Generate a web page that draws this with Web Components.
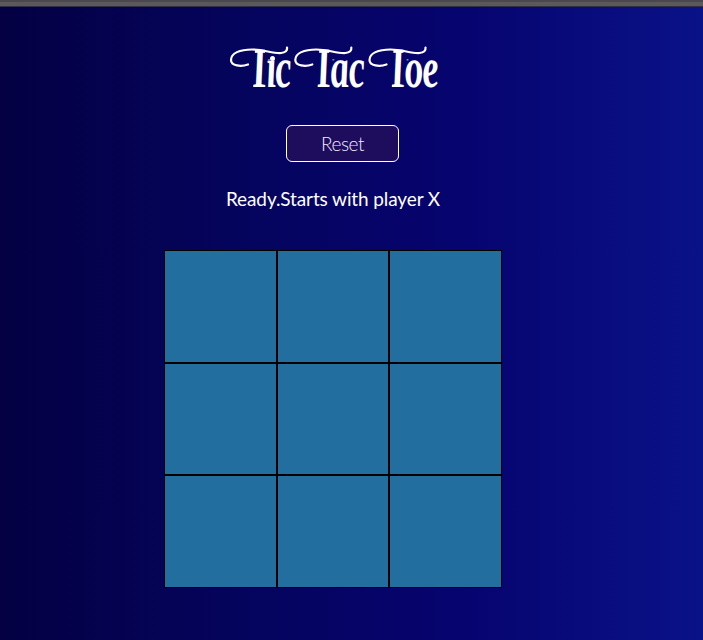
<!DOCTYPE html>
<html lang="en">
<head>
<meta charset="utf-8">
<title>Tic Tac Toe</title>
<style>
html, body { margin: 0; height: 100%; overflow: hidden; }
</style>
</head>
<body>
<tic-app></tic-app>
<script>
const define = (name, html) => customElements.define(name, class extends HTMLElement {
  constructor() {
    super();
    this.attachShadow({ mode: 'open' }).innerHTML = html;
  }
});

const swash = 'M28 29.500C21 32 11 31 11 25C11 18 20 14.500 32 14.500C44 14.500 52 18.500 61 18C65.500 17.500 67.500 15.500 67 12.500';

const word = (text, x, letters) => `
  <g transform="translate(${x} 0)">
    <g clip-path="url(#trim)"><text transform="translate(29 52) skewX(4) scale(.65 1)" x="${letters}">${text}</text></g>
    <path d="${swash}"/>
  </g>`;

define('swash-title', `
  <style>
    :host { display: block; width: 230px; height: 65px; }
    svg { display: block; }
    text { font: italic bold 57px "Liberation Serif", serif; fill: #fff; }
    path { fill: none; stroke: #fff; stroke-width: 2.2; stroke-linecap: round; }
    circle { fill: #fff; }
  </style>
  <svg width="230" height="65" viewBox="0 0 230 65" role="heading" aria-label="Tic Tac Toe">
    <defs><clipPath id="trim"><polygon points="35,14 45,14 45,24.500 90,24.500 90,56 33,56"/></clipPath></defs>
    ${word('Tic', 0, '0 28 42')}
    ${word('Tac', 64.3, '0 28 56')}
    ${word('Toe', 138.5, '0 28 55')}
    <circle cx="52.500" cy="23.500" r="2.500"/>
  </svg>`);

define('reset-button', `
  <style>
    :host { display: block; }
    button { display: block; box-sizing: border-box; width: 113px; height: 37px; padding: 1px 0 0; border: 1px solid #fff; border-radius: 6px; background: #1d0d5c; color: #f4e8ff; font: 300 19px/32px Lato, sans-serif; letter-spacing: -.5px; }
  </style>
  <button type="button"><slot></slot></button>`);

define('game-status', `
  <style>
    :host { display: block; font: 400 19px/24px Lato, sans-serif; letter-spacing: -.11px; color: #fff; white-space: nowrap; }
  </style>
  <slot></slot>`);

define('board-cell', `
  <style>
    :host { display: block; box-sizing: border-box; border: 1px solid #000; background: #216e9f; }
  </style>
  <slot></slot>`);

define('game-board', `
  <style>
    :host { display: grid; grid-template: 113px 112px 113px / 113px 112px 113px; }
  </style>
  ${'<board-cell></board-cell>'.repeat(9)}`);

define('window-edge', `
  <style>
    :host { display: block; height: 7px; background: linear-gradient(#4a484c 2px, #5b595b 2px 6px, #302e45 6px); }
  </style>`);

define('tic-app', `
  <style>
    :host { display: block; height: 640px; }
    main { display: flex; flex-direction: column; align-items: center; box-sizing: border-box; height: 633px; padding-right: 37px;
      background: linear-gradient(90deg, #040043, #05045c 33%, #06046f 66%, #0a1288); }
    swash-title { margin: 28px 0 0 4px; }
    reset-button { margin: 25px 0 0 19px; }
    game-status { margin-top: 25px; }
    game-board { margin-top: 39px; }
  </style>
  <window-edge></window-edge>
  <main>
    <swash-title></swash-title>
    <reset-button>Reset</reset-button>
    <game-status>Ready.Starts with player X</game-status>
    <game-board></game-board>
  </main>`);
</script>
</body>
</html>
